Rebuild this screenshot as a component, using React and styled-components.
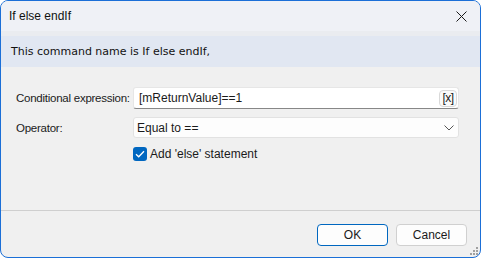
import React from "react";
import styled, { createGlobalStyle } from "styled-components";

const Global = createGlobalStyle`
  html, body { margin: 0; padding: 0; background: #ffffff; }
  * { box-sizing: border-box; }
`;

const Window = styled.div`
  position: relative;
  width: 481px;
  height: 258px;
  border: 1px solid #1b6fd7;
  border-radius: 8px;
  overflow: hidden;
  background: #f0f0f0;
  display: flex;
  flex-direction: column;
  font-family: "Liberation Sans", "Noto Sans", sans-serif;
  font-size: 12px;
  color: #1a1a1a;
`;

const TitleBar = styled.div`
  height: 30px;
  background: #eff1f6;
  display: flex;
  align-items: center;
  justify-content: space-between;
  padding: 0 10px 0 8px;
`;

const Title = styled.span`
  font-size: 12px;
  color: #111;
`;

const CloseBtn = styled.div`
  width: 12px;
  height: 12px;
  display: flex;
  align-items: center;
  justify-content: center;
  margin-right: 3px;
`;

const Strip = styled.div`
  height: 5px;
  background: #eaecf0;
`;

const InfoBand = styled.div`
  height: 31px;
  background: #e1e7f2;
  display: flex;
  align-items: center;
  padding-left: 10px;
  font-family: "DejaVu Sans", sans-serif;
  font-size: 11px;
  color: #111;
`;

const Form = styled.div`
  display: grid;
  grid-template-columns: 117px 1fr;
  row-gap: 8px;
  align-items: center;
  padding: 20px 21px 0 15px;
`;

const Label = styled.label`
  font-size: 11.5px;
  letter-spacing: -0.25px;
  white-space: nowrap;
`;

const InputBox = styled.div`
  height: 22px;
  background: #ffffff;
  border: 1px solid #e6e6e6;
  border-bottom-color: #878787;
  border-radius: 3px;
  display: flex;
  align-items: center;
  padding: 0 1px 0 5px;
`;

const InputText = styled.span`
  flex: 1;
`;

const VarButton = styled.div`
  width: 18px;
  height: 17px;
  border: 1px solid #d9d9d9;
  border-radius: 4px;
  background: #fafafa;
  display: flex;
  align-items: center;
  justify-content: center;
  font-size: 12px;
  letter-spacing: -0.5px;
`;

const Select = styled.div`
  height: 21px;
  background: #fdfdfd;
  border: 1px solid #e2e2e2;
  border-radius: 3px;
  display: flex;
  align-items: center;
  justify-content: space-between;
  padding: 0 4px 0 3px;
`;

const CheckRow = styled.div`
  grid-column: 2;
  display: flex;
  align-items: center;
  gap: 3px;
  margin-top: 1px;
`;

const CheckBox = styled.div`
  width: 14px;
  height: 14px;
  border-radius: 3px;
  background: #0067c0;
  display: flex;
  align-items: center;
  justify-content: center;
`;

const Spacer = styled.div`
  flex: 1;
`;

const Separator = styled.div`
  height: 1px;
  background: #cfcfcf;
`;

const Footer = styled.div`
  height: 46px;
  display: flex;
  justify-content: flex-end;
  align-items: flex-start;
  gap: 8px;
  padding: 13px 13px 0 0;
`;

const Button = styled.div`
  width: 71px;
  height: 22px;
  border-radius: 4px;
  border: 1px solid ${(p) => (p.$primary ? "#0067c0" : "#d0d0d0")};
  background: #fdfdfd;
  display: flex;
  align-items: center;
  justify-content: center;
  font-size: 12px;
`;

const Grip = styled.svg`
  position: absolute;
  right: 2px;
  bottom: 2px;
`;

export default function App() {
  return (
    <>
      <Global />
      <Window>
        <TitleBar>
          <Title>If else endIf</Title>
          <CloseBtn>
            <svg width="11" height="11" viewBox="0 0 11 11">
              <path d="M0.5 0.5 L10.5 10.5 M10.5 0.5 L0.5 10.5" stroke="#1a1a1a" strokeWidth="1" />
            </svg>
          </CloseBtn>
        </TitleBar>
        <Strip />
        <InfoBand>This command name is If else endIf,</InfoBand>
        <Form>
          <Label>Conditional expression:</Label>
          <InputBox>
            <InputText>[mReturnValue]==1</InputText>
            <VarButton>[x]</VarButton>
          </InputBox>
          <Label>Operator:</Label>
          <Select>
            <span>Equal to ==</span>
            <svg width="10" height="6" viewBox="0 0 10 6">
              <path d="M0.5 0.5 L5 5 L9.5 0.5" fill="none" stroke="#555" strokeWidth="1" />
            </svg>
          </Select>
          <CheckRow>
            <CheckBox>
              <svg width="10" height="8" viewBox="0 0 10 8">
                <path d="M1 4.2 L3.7 6.8 L9 1.2" fill="none" stroke="#fff" strokeWidth="1.3" />
              </svg>
            </CheckBox>
            <span>Add 'else' statement</span>
          </CheckRow>
        </Form>
        <Spacer />
        <Separator />
        <Footer>
          <Button $primary>OK</Button>
          <Button>Cancel</Button>
        </Footer>
        <Grip width="8" height="8" viewBox="0 0 8 8">
          <g fill="#a0a0a0">
            <rect x="6" y="0" width="2" height="2" />
            <rect x="3" y="3" width="2" height="2" />
            <rect x="6" y="3" width="2" height="2" />
            <rect x="0" y="6" width="2" height="2" />
            <rect x="3" y="6" width="2" height="2" />
            <rect x="6" y="6" width="2" height="2" />
          </g>
        </Grip>
      </Window>
    </>
  );
}
